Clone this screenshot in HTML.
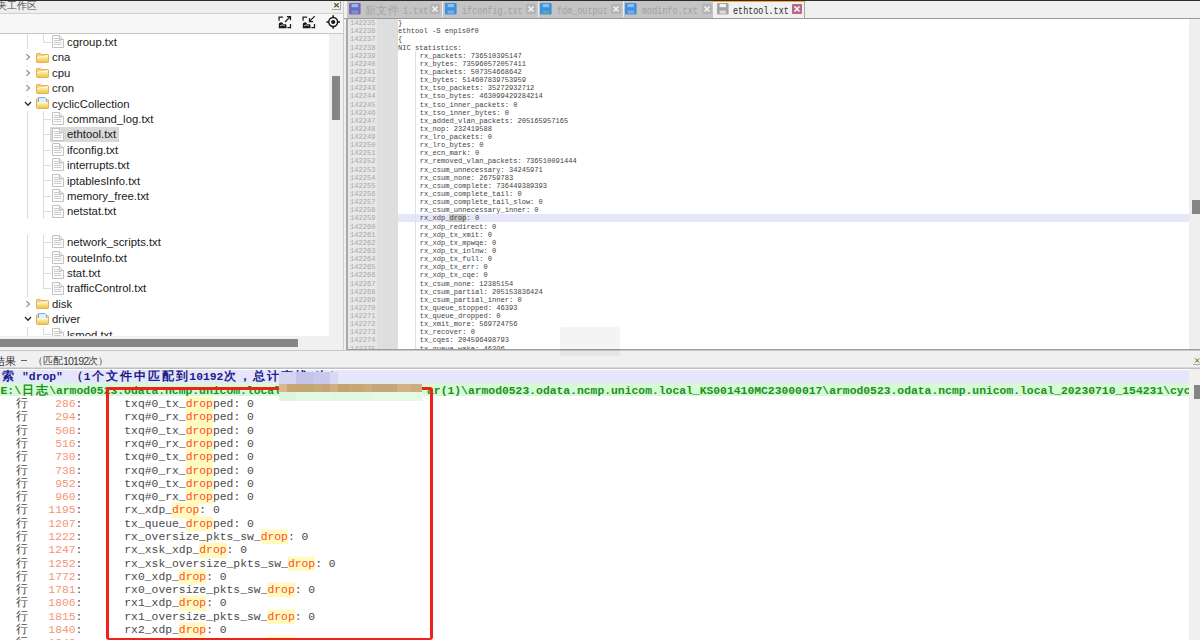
<!DOCTYPE html><html><head><meta charset="utf-8"><style>
*{margin:0;padding:0;box-sizing:border-box}
html,body{width:1200px;height:640px;overflow:hidden;background:#f0f0f0;position:relative;font-family:"Liberation Sans",sans-serif}
.abs{position:absolute}
.mono{font-family:"Liberation Mono",monospace;white-space:pre}
.ed{position:absolute;left:398px;font-family:"Liberation Mono",monospace;font-size:7.08px;line-height:8.136px;height:8.136px;color:#444444;white-space:pre}
.ln{position:absolute;left:350px;font-family:"Liberation Mono",monospace;font-size:7.08px;line-height:8.136px;height:8.136px;color:#a8a8a8;white-space:pre}
.tr{position:absolute;font-size:11.35px;line-height:15px;color:#1a1a1a;white-space:pre}
.rs{position:absolute;left:0;width:1189px;font-family:"Liberation Mono",monospace;font-size:11.36px;line-height:13.29px;height:13.29px;color:#4a4a4a;white-space:pre}
.rs>span{top:1.8px}
.dr{color:#ff4d2e;background:#fffbbe;display:inline-block;height:13.29px;line-height:13.29px;vertical-align:top;box-shadow:0 -1.4px 0 #fffbbe}
.num{color:#f59478}
.cj{display:inline-block;text-align:center;vertical-align:baseline;line-height:10px}
</style></head><body>
<div class="abs" style="left:0;top:0;width:1200px;height:1px;background:#2b2b2b"></div>
<div class="abs" style="left:0;top:1px;width:343px;height:12px;background:#eeeeee"></div>
<div class="abs" style="left:-23.5px;top:-0.8px;font-size:10.3px;line-height:13px;color:#505050;letter-spacing:0px">文件夹工作区</div>
<div class="abs" style="left:332px;top:1px;width:9px;height:9px;background:#f3efdc;border-right:1px solid #a8a8a0;border-bottom:1px solid #a8a8a0"></div>
<svg class="abs" style="left:332px;top:1px" width="10" height="10"><path d="M2.3 2.3 L6.7 6.3 M6.7 2.3 L2.3 6.3" stroke="#5a5a52" stroke-width="1.3"/></svg>
<div class="abs" style="left:0;top:13px;width:343px;height:1px;background:#d0d0d0"></div>
<div class="abs" style="left:0;top:14px;width:343px;height:19px;background:#f7f7f7"></div>
<div class="abs" style="left:0;top:33px;width:343px;height:1px;background:#c8c8c8"></div>
<svg class="abs" style="left:270px;top:14px" width="73" height="19" viewBox="270 14 73 19"><g fill="none" stroke="#1e1e1e" stroke-width="1.25" stroke-linecap="square"><path d="M279.1 20 V17 H282.5"/><path d="M290.5 24.5 V27.6 H288.0"/><path d="M285.5 21.5 L290.3 16.6 M287.5 16.6 H290.5 V19.6"/></g><path d="M278.8 28.2 V25 Q278.8 22.2 281.1 22.2 Q282.7 22.2 283.3 24 H285.0 Q286.5 24 286.5 25.5 V28.2 Z" fill="#1a1a1a"/><path d="M280.1 25.8 Q282.0 24.6 285.0 25.2" fill="none" stroke="#f4f4f4" stroke-width="0.8"/><g fill="none" stroke="#1e1e1e" stroke-width="1.25" stroke-linecap="square"><path d="M303.1 20 V17 H306.5"/><path d="M314.5 24.5 V27.6 H312.0"/><path d="M314.3 16.6 L309.5 21.4 M309.5 18.5 V21.5 H312.5"/></g><path d="M302.8 28.2 V25 Q302.8 22.2 305.1 22.2 Q306.7 22.2 307.3 24 H309.0 Q310.5 24 310.5 25.5 V28.2 Z" fill="#1a1a1a"/><path d="M304.1 25.8 Q306.0 24.6 309.0 25.2" fill="none" stroke="#f4f4f4" stroke-width="0.8"/><circle cx="333.2" cy="22" r="4.4" fill="none" stroke="#151515" stroke-width="1.5"/><circle cx="333.2" cy="22" r="2.1" fill="#151515"/><path d="M333.2 15.2 V17.4 M333.2 26.6 V28.8 M326.4 22 H328.6 M337.8 22 H340" stroke="#151515" stroke-width="1.5"/></svg>
<div class="abs" style="left:0;top:34px;width:329px;height:302px;background:#ffffff"></div>
<div class="abs" style="left:329px;top:34px;width:14px;height:316px;background:#f0f0f0"></div>
<div class="abs" style="left:332px;top:76px;width:8px;height:44px;background:#868686"></div>
<div class="abs" style="left:0;top:336px;width:329px;height:14px;background:#f0f0f0"></div>
<div class="abs" style="left:0;top:339px;width:298px;height:8px;background:#868686"></div>
<div class="abs" style="left:343px;top:1px;width:1.2px;height:350px;background:#cecece"></div>
<div class="abs" style="left:0;top:350px;width:344px;height:1px;background:#b0b0b0"></div>
<div class="abs" style="left:0;top:0;width:329px;height:336px;overflow:hidden">
<div class="abs" style="left:27px;top:34px;width:1px;height:14.899999999999999px;background:#dcdcdc"></div>
<div class="abs" style="left:43px;top:34px;width:1px;height:8.5px;background:#dcdcdc"></div>
<div class="abs" style="left:27px;top:111.1px;width:1px;height:107.80000000000001px;background:#dcdcdc"></div>
<div class="abs" style="left:27px;top:234.70000000000002px;width:1px;height:62.19999999999996px;background:#dcdcdc"></div>
<div class="abs" style="left:27px;top:326.7px;width:1px;height:9.300000000000011px;background:#dcdcdc"></div>
<div class="abs" style="left:43px;top:326.7px;width:1px;height:8.400000000000034px;background:#dcdcdc"></div>
<div class="abs" style="left:43px;top:42px;width:8px;height:1px;background:#dcdcdc"></div>
<div class="abs" style="left:43px;top:119px;width:8px;height:1px;background:#dcdcdc"></div>
<div class="abs" style="left:43px;top:134px;width:8px;height:1px;background:#dcdcdc"></div>
<div class="abs" style="left:43px;top:150px;width:8px;height:1px;background:#dcdcdc"></div>
<div class="abs" style="left:43px;top:165px;width:8px;height:1px;background:#dcdcdc"></div>
<div class="abs" style="left:43px;top:180px;width:8px;height:1px;background:#dcdcdc"></div>
<div class="abs" style="left:43px;top:196px;width:8px;height:1px;background:#dcdcdc"></div>
<div class="abs" style="left:43px;top:211px;width:8px;height:1px;background:#dcdcdc"></div>
<div class="abs" style="left:43px;top:242px;width:8px;height:1px;background:#dcdcdc"></div>
<div class="abs" style="left:43px;top:257px;width:8px;height:1px;background:#dcdcdc"></div>
<div class="abs" style="left:43px;top:273px;width:8px;height:1px;background:#dcdcdc"></div>
<div class="abs" style="left:43px;top:288px;width:8px;height:1px;background:#dcdcdc"></div>
<div class="abs" style="left:43px;top:334px;width:8px;height:1px;background:#dcdcdc"></div>
<div class="abs" style="left:27px;top:65.1px;width:1px;height:2px;background:#e4e4e4"></div>
<div class="abs" style="left:27px;top:80.5px;width:1px;height:2px;background:#e4e4e4"></div>
<div class="abs" style="left:27px;top:95.9px;width:1px;height:2px;background:#e4e4e4"></div>
<div class="abs" style="left:27px;top:311.5px;width:1px;height:2px;background:#e4e4e4"></div>
<div class="abs" style="left:43px;top:111.1px;width:1px;height:107.80000000000001px;background:#dcdcdc"></div>
<div class="abs" style="left:43px;top:234.70000000000002px;width:1px;height:54.19999999999996px;background:#dcdcdc"></div>
<svg class="abs" style="left:52px;top:35.2px" width="12" height="13" viewBox="0 0 12 13"><path d="M0.5 0.5 H7.5 L11.5 4.5 V12.5 H0.5 Z" fill="#fdfdfd" stroke="#c2c2c2"/><path d="M7.5 0.5 V4.5 H11.5" fill="#ececec" stroke="#c2c2c2"/><path d="M2 3.5 H7 M2 5.5 H9.5 M2 7.5 H9.5 M2 9.5 H9.5" stroke="#c6c6c6" stroke-width="0.9"/></svg>
<div class="tr" style="left:67px;top:35.0px">cgroup.txt</div>
<svg class="abs" style="left:25px;top:53.3px" width="7" height="8" viewBox="0 0 7 8"><path d="M1.3 1.2 L4.6 4 L1.3 6.8" fill="none" stroke="#8a8a8a" stroke-width="1.1"/></svg>
<svg class="abs" style="left:36px;top:52.7px" width="13" height="10" viewBox="0 0 13 10"><defs><linearGradient id="fg" x1="0" y1="0" x2="0" y2="1"><stop offset="0" stop-color="#fff3c4"/><stop offset="0.55" stop-color="#f9dc78"/><stop offset="1" stop-color="#f0c444"/></linearGradient></defs><path d="M0.5 1.2 Q0.5 0.5 1.2 0.5 H4.5 L5.5 1.5 H11.8 Q12.5 1.5 12.5 2.2 V8.8 Q12.5 9.5 11.8 9.5 H1.2 Q0.5 9.5 0.5 8.8 Z" fill="#f4d27a" stroke="#e6ae5e"/><path d="M1 4.2 L12 2.6 V9 H1 Z" fill="url(#fg)"/><path d="M1.2 4.3 L11.8 2.7" stroke="#fffdf0" stroke-width="1"/></svg>
<div class="tr" style="left:52px;top:50.4px">cna</div>
<svg class="abs" style="left:25px;top:68.7px" width="7" height="8" viewBox="0 0 7 8"><path d="M1.3 1.2 L4.6 4 L1.3 6.8" fill="none" stroke="#8a8a8a" stroke-width="1.1"/></svg>
<svg class="abs" style="left:36px;top:68.1px" width="13" height="10" viewBox="0 0 13 10"><defs><linearGradient id="fg" x1="0" y1="0" x2="0" y2="1"><stop offset="0" stop-color="#fff3c4"/><stop offset="0.55" stop-color="#f9dc78"/><stop offset="1" stop-color="#f0c444"/></linearGradient></defs><path d="M0.5 1.2 Q0.5 0.5 1.2 0.5 H4.5 L5.5 1.5 H11.8 Q12.5 1.5 12.5 2.2 V8.8 Q12.5 9.5 11.8 9.5 H1.2 Q0.5 9.5 0.5 8.8 Z" fill="#f4d27a" stroke="#e6ae5e"/><path d="M1 4.2 L12 2.6 V9 H1 Z" fill="url(#fg)"/><path d="M1.2 4.3 L11.8 2.7" stroke="#fffdf0" stroke-width="1"/></svg>
<div class="tr" style="left:52px;top:65.8px">cpu</div>
<svg class="abs" style="left:25px;top:84.1px" width="7" height="8" viewBox="0 0 7 8"><path d="M1.3 1.2 L4.6 4 L1.3 6.8" fill="none" stroke="#8a8a8a" stroke-width="1.1"/></svg>
<svg class="abs" style="left:36px;top:83.5px" width="13" height="10" viewBox="0 0 13 10"><defs><linearGradient id="fg" x1="0" y1="0" x2="0" y2="1"><stop offset="0" stop-color="#fff3c4"/><stop offset="0.55" stop-color="#f9dc78"/><stop offset="1" stop-color="#f0c444"/></linearGradient></defs><path d="M0.5 1.2 Q0.5 0.5 1.2 0.5 H4.5 L5.5 1.5 H11.8 Q12.5 1.5 12.5 2.2 V8.8 Q12.5 9.5 11.8 9.5 H1.2 Q0.5 9.5 0.5 8.8 Z" fill="#f4d27a" stroke="#e6ae5e"/><path d="M1 4.2 L12 2.6 V9 H1 Z" fill="url(#fg)"/><path d="M1.2 4.3 L11.8 2.7" stroke="#fffdf0" stroke-width="1"/></svg>
<div class="tr" style="left:52px;top:81.2px">cron</div>
<svg class="abs" style="left:24px;top:100.8px" width="8" height="6" viewBox="0 0 8 6"><path d="M1 1 L4 4.2 L7 1" fill="none" stroke="#2a2a2a" stroke-width="1.3"/></svg>
<svg class="abs" style="left:36px;top:97.3px" width="13" height="12" viewBox="0 0 13 12"><defs><linearGradient id="og" x1="0" y1="0" x2="0" y2="1"><stop offset="0" stop-color="#fff3c0"/><stop offset="1" stop-color="#f2c84c"/></linearGradient></defs><path d="M0.5 2.5 Q0.5 1.5 1.5 1.5 H4.5 L5.5 2.5 H11.5 Q12.5 2.5 12.5 3.5 V10.5 Q12.5 11.5 11.5 11.5 H1.5 Q0.5 11.5 0.5 10.5 Z" fill="#f6d680" stroke="#e4ad5c"/><path d="M2.5 0.5 H9 L10.5 2.5 V6 H2.5 Z" fill="#dcefff" stroke="#5f9fd6" stroke-width="0.8"/><path d="M1 5.5 H12 V11 H1 Z" fill="url(#og)"/><path d="M1 5.6 H12" stroke="#fffbe8" stroke-width="0.9"/></svg>
<div class="tr" style="left:52px;top:96.6px">cyclicCollection</div>
<svg class="abs" style="left:52px;top:112.2px" width="12" height="13" viewBox="0 0 12 13"><path d="M0.5 0.5 H7.5 L11.5 4.5 V12.5 H0.5 Z" fill="#fdfdfd" stroke="#c2c2c2"/><path d="M7.5 0.5 V4.5 H11.5" fill="#ececec" stroke="#c2c2c2"/><path d="M2 3.5 H7 M2 5.5 H9.5 M2 7.5 H9.5 M2 9.5 H9.5" stroke="#c6c6c6" stroke-width="0.9"/></svg>
<div class="tr" style="left:67px;top:112.0px">command_log.txt</div>
<div class="abs" style="left:50.3px;top:126.5px;width:68.7px;height:15.2px;background:#d9d9d9"></div>
<svg class="abs" style="left:52px;top:127.6px" width="12" height="13" viewBox="0 0 12 13"><path d="M0.5 0.5 H7.5 L11.5 4.5 V12.5 H0.5 Z" fill="#fdfdfd" stroke="#c2c2c2"/><path d="M7.5 0.5 V4.5 H11.5" fill="#ececec" stroke="#c2c2c2"/><path d="M2 3.5 H7 M2 5.5 H9.5 M2 7.5 H9.5 M2 9.5 H9.5" stroke="#c6c6c6" stroke-width="0.9"/></svg>
<div class="tr" style="left:67px;top:127.4px">ethtool.txt</div>
<svg class="abs" style="left:52px;top:143.0px" width="12" height="13" viewBox="0 0 12 13"><path d="M0.5 0.5 H7.5 L11.5 4.5 V12.5 H0.5 Z" fill="#fdfdfd" stroke="#c2c2c2"/><path d="M7.5 0.5 V4.5 H11.5" fill="#ececec" stroke="#c2c2c2"/><path d="M2 3.5 H7 M2 5.5 H9.5 M2 7.5 H9.5 M2 9.5 H9.5" stroke="#c6c6c6" stroke-width="0.9"/></svg>
<div class="tr" style="left:67px;top:142.8px">ifconfig.txt</div>
<svg class="abs" style="left:52px;top:158.4px" width="12" height="13" viewBox="0 0 12 13"><path d="M0.5 0.5 H7.5 L11.5 4.5 V12.5 H0.5 Z" fill="#fdfdfd" stroke="#c2c2c2"/><path d="M7.5 0.5 V4.5 H11.5" fill="#ececec" stroke="#c2c2c2"/><path d="M2 3.5 H7 M2 5.5 H9.5 M2 7.5 H9.5 M2 9.5 H9.5" stroke="#c6c6c6" stroke-width="0.9"/></svg>
<div class="tr" style="left:67px;top:158.2px">interrupts.txt</div>
<svg class="abs" style="left:52px;top:173.8px" width="12" height="13" viewBox="0 0 12 13"><path d="M0.5 0.5 H7.5 L11.5 4.5 V12.5 H0.5 Z" fill="#fdfdfd" stroke="#c2c2c2"/><path d="M7.5 0.5 V4.5 H11.5" fill="#ececec" stroke="#c2c2c2"/><path d="M2 3.5 H7 M2 5.5 H9.5 M2 7.5 H9.5 M2 9.5 H9.5" stroke="#c6c6c6" stroke-width="0.9"/></svg>
<div class="tr" style="left:67px;top:173.6px">iptablesInfo.txt</div>
<svg class="abs" style="left:52px;top:189.2px" width="12" height="13" viewBox="0 0 12 13"><path d="M0.5 0.5 H7.5 L11.5 4.5 V12.5 H0.5 Z" fill="#fdfdfd" stroke="#c2c2c2"/><path d="M7.5 0.5 V4.5 H11.5" fill="#ececec" stroke="#c2c2c2"/><path d="M2 3.5 H7 M2 5.5 H9.5 M2 7.5 H9.5 M2 9.5 H9.5" stroke="#c6c6c6" stroke-width="0.9"/></svg>
<div class="tr" style="left:67px;top:189.0px">memory_free.txt</div>
<svg class="abs" style="left:52px;top:204.6px" width="12" height="13" viewBox="0 0 12 13"><path d="M0.5 0.5 H7.5 L11.5 4.5 V12.5 H0.5 Z" fill="#fdfdfd" stroke="#c2c2c2"/><path d="M7.5 0.5 V4.5 H11.5" fill="#ececec" stroke="#c2c2c2"/><path d="M2 3.5 H7 M2 5.5 H9.5 M2 7.5 H9.5 M2 9.5 H9.5" stroke="#c6c6c6" stroke-width="0.9"/></svg>
<div class="tr" style="left:67px;top:204.4px">netstat.txt</div>
<svg class="abs" style="left:52px;top:235.4px" width="12" height="13" viewBox="0 0 12 13"><path d="M0.5 0.5 H7.5 L11.5 4.5 V12.5 H0.5 Z" fill="#fdfdfd" stroke="#c2c2c2"/><path d="M7.5 0.5 V4.5 H11.5" fill="#ececec" stroke="#c2c2c2"/><path d="M2 3.5 H7 M2 5.5 H9.5 M2 7.5 H9.5 M2 9.5 H9.5" stroke="#c6c6c6" stroke-width="0.9"/></svg>
<div class="tr" style="left:67px;top:235.2px">network_scripts.txt</div>
<svg class="abs" style="left:52px;top:250.8px" width="12" height="13" viewBox="0 0 12 13"><path d="M0.5 0.5 H7.5 L11.5 4.5 V12.5 H0.5 Z" fill="#fdfdfd" stroke="#c2c2c2"/><path d="M7.5 0.5 V4.5 H11.5" fill="#ececec" stroke="#c2c2c2"/><path d="M2 3.5 H7 M2 5.5 H9.5 M2 7.5 H9.5 M2 9.5 H9.5" stroke="#c6c6c6" stroke-width="0.9"/></svg>
<div class="tr" style="left:67px;top:250.6px">routeInfo.txt</div>
<svg class="abs" style="left:52px;top:266.2px" width="12" height="13" viewBox="0 0 12 13"><path d="M0.5 0.5 H7.5 L11.5 4.5 V12.5 H0.5 Z" fill="#fdfdfd" stroke="#c2c2c2"/><path d="M7.5 0.5 V4.5 H11.5" fill="#ececec" stroke="#c2c2c2"/><path d="M2 3.5 H7 M2 5.5 H9.5 M2 7.5 H9.5 M2 9.5 H9.5" stroke="#c6c6c6" stroke-width="0.9"/></svg>
<div class="tr" style="left:67px;top:266.0px">stat.txt</div>
<svg class="abs" style="left:52px;top:281.6px" width="12" height="13" viewBox="0 0 12 13"><path d="M0.5 0.5 H7.5 L11.5 4.5 V12.5 H0.5 Z" fill="#fdfdfd" stroke="#c2c2c2"/><path d="M7.5 0.5 V4.5 H11.5" fill="#ececec" stroke="#c2c2c2"/><path d="M2 3.5 H7 M2 5.5 H9.5 M2 7.5 H9.5 M2 9.5 H9.5" stroke="#c6c6c6" stroke-width="0.9"/></svg>
<div class="tr" style="left:67px;top:281.4px">trafficControl.txt</div>
<svg class="abs" style="left:25px;top:299.7px" width="7" height="8" viewBox="0 0 7 8"><path d="M1.3 1.2 L4.6 4 L1.3 6.8" fill="none" stroke="#8a8a8a" stroke-width="1.1"/></svg>
<svg class="abs" style="left:36px;top:299.1px" width="13" height="10" viewBox="0 0 13 10"><defs><linearGradient id="fg" x1="0" y1="0" x2="0" y2="1"><stop offset="0" stop-color="#fff3c4"/><stop offset="0.55" stop-color="#f9dc78"/><stop offset="1" stop-color="#f0c444"/></linearGradient></defs><path d="M0.5 1.2 Q0.5 0.5 1.2 0.5 H4.5 L5.5 1.5 H11.8 Q12.5 1.5 12.5 2.2 V8.8 Q12.5 9.5 11.8 9.5 H1.2 Q0.5 9.5 0.5 8.8 Z" fill="#f4d27a" stroke="#e6ae5e"/><path d="M1 4.2 L12 2.6 V9 H1 Z" fill="url(#fg)"/><path d="M1.2 4.3 L11.8 2.7" stroke="#fffdf0" stroke-width="1"/></svg>
<div class="tr" style="left:52px;top:296.8px">disk</div>
<svg class="abs" style="left:24px;top:316.4px" width="8" height="6" viewBox="0 0 8 6"><path d="M1 1 L4 4.2 L7 1" fill="none" stroke="#2a2a2a" stroke-width="1.3"/></svg>
<svg class="abs" style="left:36px;top:312.9px" width="13" height="12" viewBox="0 0 13 12"><defs><linearGradient id="og" x1="0" y1="0" x2="0" y2="1"><stop offset="0" stop-color="#fff3c0"/><stop offset="1" stop-color="#f2c84c"/></linearGradient></defs><path d="M0.5 2.5 Q0.5 1.5 1.5 1.5 H4.5 L5.5 2.5 H11.5 Q12.5 2.5 12.5 3.5 V10.5 Q12.5 11.5 11.5 11.5 H1.5 Q0.5 11.5 0.5 10.5 Z" fill="#f6d680" stroke="#e4ad5c"/><path d="M2.5 0.5 H9 L10.5 2.5 V6 H2.5 Z" fill="#dcefff" stroke="#5f9fd6" stroke-width="0.8"/><path d="M1 5.5 H12 V11 H1 Z" fill="url(#og)"/><path d="M1 5.6 H12" stroke="#fffbe8" stroke-width="0.9"/></svg>
<div class="tr" style="left:52px;top:312.2px">driver</div>
<svg class="abs" style="left:52px;top:327.8px" width="12" height="13" viewBox="0 0 12 13"><path d="M0.5 0.5 H7.5 L11.5 4.5 V12.5 H0.5 Z" fill="#fdfdfd" stroke="#c2c2c2"/><path d="M7.5 0.5 V4.5 H11.5" fill="#ececec" stroke="#c2c2c2"/><path d="M2 3.5 H7 M2 5.5 H9.5 M2 7.5 H9.5 M2 9.5 H9.5" stroke="#c6c6c6" stroke-width="0.9"/></svg>
<div class="tr" style="left:67px;top:327.6px">lsmod.txt</div>
</div>
<div class="abs" style="left:344px;top:1px;width:856px;height:17px;background:#f0f0f0"></div>
<div class="abs" style="left:347px;top:1px;width:366px;height:17px;background:#c4c4c4"></div>
<div class="abs" style="left:442px;top:1px;width:1px;height:16px;background:#ececec"></div>
<div class="abs" style="left:538px;top:1px;width:1px;height:16px;background:#ececec"></div>
<div class="abs" style="left:623px;top:1px;width:1px;height:16px;background:#ececec"></div>
<svg class="abs" style="left:349px;top:3px" width="12" height="12" viewBox="0 0 12 12"><rect x="0" y="0" width="11.6" height="11.5" rx="1.2" fill="#7a66b4"/><rect x="2.6" y="1" width="6.4" height="3.2" fill="#86c2f2"/><rect x="2.6" y="7.5" width="6.4" height="3.2" fill="#7c90d4"/></svg>
<svg class="abs" style="left:444.8px;top:3px" width="12" height="12" viewBox="0 0 12 12"><rect x="0" y="0" width="11.6" height="11.5" rx="1.2" fill="#3f8fdc"/><rect x="2.6" y="1" width="6.4" height="3.2" fill="#86c2f2"/><rect x="2.6" y="7.5" width="6.4" height="3.2" fill="#78aee6"/></svg>
<svg class="abs" style="left:540.3px;top:3px" width="12" height="12" viewBox="0 0 12 12"><rect x="0" y="0" width="11.6" height="11.5" rx="1.2" fill="#3f8fdc"/><rect x="2.6" y="1" width="6.4" height="3.2" fill="#86c2f2"/><rect x="2.6" y="7.5" width="6.4" height="3.2" fill="#58aaa0"/></svg>
<svg class="abs" style="left:625.3px;top:3px" width="12" height="12" viewBox="0 0 12 12"><rect x="0" y="0" width="11.6" height="11.5" rx="1.2" fill="#3f8fdc"/><rect x="2.6" y="1" width="6.4" height="3.2" fill="#86c2f2"/><rect x="2.6" y="7.5" width="6.4" height="3.2" fill="#78aee6"/></svg>
<div class="abs" style="left:365px;top:3.5px;font-size:10.5px;line-height:13px;color:#a4a4a4;letter-spacing:0.3px">新文件</div>
<div class="abs mono" style="left:403px;top:5.5px;font-size:10px;line-height:12px;color:#a2a2a2;transform:scaleX(0.845);transform-origin:0 0">1.txt</div>
<svg class="abs" style="left:430px;top:4px" width="10" height="10" viewBox="0 0 10 10"><rect x="0" y="0" width="10" height="10" rx="1" fill="#b4b4b4"/><path d="M2.5 2.5 L7.5 7.5 M7.5 2.5 L2.5 7.5" stroke="#f4f4f4" stroke-width="1.6"/></svg>
<div class="abs mono" style="left:461.5px;top:5.5px;font-size:10px;line-height:12px;color:#a2a2a2;transform:scaleX(0.845);transform-origin:0 0">ifconfig.txt</div>
<svg class="abs" style="left:525.5px;top:4px" width="10" height="10" viewBox="0 0 10 10"><rect x="0" y="0" width="10" height="10" rx="1" fill="#b4b4b4"/><path d="M2.5 2.5 L7.5 7.5 M7.5 2.5 L2.5 7.5" stroke="#f4f4f4" stroke-width="1.6"/></svg>
<div class="abs mono" style="left:557px;top:5.5px;font-size:10px;line-height:12px;color:#a2a2a2;transform:scaleX(0.845);transform-origin:0 0">fdm_output</div>
<svg class="abs" style="left:611px;top:4px" width="10" height="10" viewBox="0 0 10 10"><rect x="0" y="0" width="10" height="10" rx="1" fill="#b4b4b4"/><path d="M2.5 2.5 L7.5 7.5 M7.5 2.5 L2.5 7.5" stroke="#f4f4f4" stroke-width="1.6"/></svg>
<div class="abs mono" style="left:642px;top:5.5px;font-size:10px;line-height:12px;color:#a2a2a2;transform:scaleX(0.845);transform-origin:0 0">modinfo.txt</div>
<svg class="abs" style="left:701.5px;top:4px" width="10" height="10" viewBox="0 0 10 10"><rect x="0" y="0" width="10" height="10" rx="1" fill="#b4b4b4"/><path d="M2.5 2.5 L7.5 7.5 M7.5 2.5 L2.5 7.5" stroke="#f4f4f4" stroke-width="1.6"/></svg>
<div class="abs" style="left:713px;top:1px;width:92px;height:17px;background:#f0f0f0;border-right:1px solid #a8a8a8"></div>
<div class="abs" style="left:713px;top:1px;width:92px;height:1.2px;background:#f5a623"></div>
<svg class="abs" style="left:716.8px;top:3px" width="12" height="12" viewBox="0 0 12 12"><rect x="0" y="0" width="11.6" height="11.5" rx="1.2" fill="#a4a4a4"/><rect x="2.6" y="1" width="6.4" height="3.2" fill="#f2f2f2"/><rect x="2.6" y="7.5" width="6.4" height="3.2" fill="#dadada"/></svg>
<div class="abs mono" style="left:732.5px;top:5.5px;font-size:10px;line-height:12px;color:#2c2c2c;transform:scaleX(0.845);transform-origin:0 0">ethtool.txt</div>
<svg class="abs" style="left:791.5px;top:4px" width="10" height="10" viewBox="0 0 10 10"><rect x="0" y="0" width="10" height="10" rx="1" fill="#b8688a"/><path d="M2.5 2.5 L7.5 7.5 M7.5 2.5 L2.5 7.5" stroke="#ffffff" stroke-width="1.6"/></svg>
<div class="abs" style="left:344px;top:17.5px;width:856px;height:1px;background:#999999"></div>
<div class="abs" style="left:346.2px;top:18px;width:1.5px;height:333px;background:#a8a8a8"></div>
<div class="abs" style="left:347.5px;top:18.5px;width:29px;height:330px;background:#e7e7e7"></div>
<div class="abs" style="left:376.5px;top:18.5px;width:21.5px;height:330px;background:#dedede"></div>
<div class="abs" style="left:398px;top:18.5px;width:791px;height:330px;background:#ffffff"></div>
<div class="abs" style="left:1189px;top:18.5px;width:11px;height:330px;background:#efefef"></div>
<div class="abs" style="left:1192px;top:200px;width:8px;height:14px;background:#858585"></div>
<div class="abs" style="left:346px;top:348.5px;width:854px;height:2px;background:#a8a8a8"></div>
<div class="abs" style="left:398px;top:18.5px;width:791px;height:330px;overflow:hidden">
<div class="abs" style="left:0;top:195.51px;width:791px;height:8.136px;background:#e6e6fb"></div>
<div class="abs" style="left:16.8px;top:32.79px;width:0;height:301.03px;border-left:1px solid #e0e0e0"></div>
<div class="ed" style="left:0px;top:0.65px">}</div>
<div class="ed" style="left:0px;top:8.786px">ethtool -S enp1s0f0</div>
<div class="ed" style="left:0px;top:16.922px">{</div>
<div class="ed" style="left:0px;top:25.058px">NIC statistics:</div>
<div class="ed" style="left:21.7px;top:33.194px">rx_packets: 736510395147</div>
<div class="ed" style="left:21.7px;top:41.33px">rx_bytes: 735960572057411</div>
<div class="ed" style="left:21.7px;top:49.466px">tx_packets: 507354668642</div>
<div class="ed" style="left:21.7px;top:57.602px">tx_bytes: 514607839753959</div>
<div class="ed" style="left:21.7px;top:65.738px">tx_tso_packets: 35272932712</div>
<div class="ed" style="left:21.7px;top:73.874px">tx_tso_bytes: 463099429284214</div>
<div class="ed" style="left:21.7px;top:82.01px">tx_tso_inner_packets: 0</div>
<div class="ed" style="left:21.7px;top:90.146px">tx_tso_inner_bytes: 0</div>
<div class="ed" style="left:21.7px;top:98.282px">tx_added_vlan_packets: 205165957165</div>
<div class="ed" style="left:21.7px;top:106.418px">tx_nop: 232419588</div>
<div class="ed" style="left:21.7px;top:114.554px">rx_lro_packets: 0</div>
<div class="ed" style="left:21.7px;top:122.69px">rx_lro_bytes: 0</div>
<div class="ed" style="left:21.7px;top:130.826px">rx_ecn_mark: 0</div>
<div class="ed" style="left:21.7px;top:138.962px">rx_removed_vlan_packets: 736510091444</div>
<div class="ed" style="left:21.7px;top:147.098px">rx_csum_unnecessary: 34245971</div>
<div class="ed" style="left:21.7px;top:155.234px">rx_csum_none: 26759783</div>
<div class="ed" style="left:21.7px;top:163.37px">rx_csum_complete: 736449389393</div>
<div class="ed" style="left:21.7px;top:171.506px">rx_csum_complete_tail: 0</div>
<div class="ed" style="left:21.7px;top:179.642px">rx_csum_complete_tail_slow: 0</div>
<div class="ed" style="left:21.7px;top:187.778px">rx_csum_unnecessary_inner: 0</div>
<div class="ed" style="left:21.7px;top:195.914px">rx_xdp_<span style="background:#c4c4c4">drop</span>: 0</div>
<div class="ed" style="left:21.7px;top:204.05px">rx_xdp_redirect: 0</div>
<div class="ed" style="left:21.7px;top:212.186px">rx_xdp_tx_xmit: 0</div>
<div class="ed" style="left:21.7px;top:220.322px">rx_xdp_tx_mpwqe: 0</div>
<div class="ed" style="left:21.7px;top:228.458px">rx_xdp_tx_inlnw: 0</div>
<div class="ed" style="left:21.7px;top:236.594px">rx_xdp_tx_full: 0</div>
<div class="ed" style="left:21.7px;top:244.73px">rx_xdp_tx_err: 0</div>
<div class="ed" style="left:21.7px;top:252.866px">rx_xdp_tx_cqe: 0</div>
<div class="ed" style="left:21.7px;top:261.002px">tx_csum_none: 12385154</div>
<div class="ed" style="left:21.7px;top:269.138px">tx_csum_partial: 205153836424</div>
<div class="ed" style="left:21.7px;top:277.274px">tx_csum_partial_inner: 0</div>
<div class="ed" style="left:21.7px;top:285.41px">tx_queue_stopped: 46393</div>
<div class="ed" style="left:21.7px;top:293.546px">tx_queue_dropped: 0</div>
<div class="ed" style="left:21.7px;top:301.682px">tx_xmit_more: 569724756</div>
<div class="ed" style="left:21.7px;top:309.818px">tx_recover: 0</div>
<div class="ed" style="left:21.7px;top:317.954px">tx_cqes: 204596498793</div>
<div class="ed" style="left:21.7px;top:326.09px">tx_queue_wake: 46396</div>
</div>
<div class="ln" style="top:19.15px">142235</div>
<div class="ln" style="top:27.286px">142236</div>
<div class="ln" style="top:35.422px">142237</div>
<div class="ln" style="top:43.558px">142238</div>
<div class="ln" style="top:51.694px">142239</div>
<div class="ln" style="top:59.83px">142240</div>
<div class="ln" style="top:67.966px">142241</div>
<div class="ln" style="top:76.102px">142242</div>
<div class="ln" style="top:84.238px">142243</div>
<div class="ln" style="top:92.374px">142244</div>
<div class="ln" style="top:100.51px">142245</div>
<div class="ln" style="top:108.646px">142246</div>
<div class="ln" style="top:116.782px">142247</div>
<div class="ln" style="top:124.918px">142248</div>
<div class="ln" style="top:133.054px">142249</div>
<div class="ln" style="top:141.19px">142250</div>
<div class="ln" style="top:149.326px">142251</div>
<div class="ln" style="top:157.462px">142252</div>
<div class="ln" style="top:165.598px">142253</div>
<div class="ln" style="top:173.734px">142254</div>
<div class="ln" style="top:181.87px">142255</div>
<div class="ln" style="top:190.006px">142256</div>
<div class="ln" style="top:198.142px">142257</div>
<div class="ln" style="top:206.278px">142258</div>
<div class="ln" style="top:214.414px">142259</div>
<div class="ln" style="top:222.55px">142260</div>
<div class="ln" style="top:230.686px">142261</div>
<div class="ln" style="top:238.822px">142262</div>
<div class="ln" style="top:246.958px">142263</div>
<div class="ln" style="top:255.094px">142264</div>
<div class="ln" style="top:263.23px">142265</div>
<div class="ln" style="top:271.366px">142266</div>
<div class="ln" style="top:279.502px">142267</div>
<div class="ln" style="top:287.638px">142268</div>
<div class="ln" style="top:295.774px">142269</div>
<div class="ln" style="top:303.91px">142270</div>
<div class="ln" style="top:312.046px">142271</div>
<div class="ln" style="top:320.182px">142272</div>
<div class="ln" style="top:328.318px">142273</div>
<div class="ln" style="top:336.454px">142274</div>
<div class="ln" style="top:344.59px">142275</div>
<div class="abs" style="left:346px;top:348.5px;width:854px;height:1.5px;background:#9c9c9c"></div>
<div class="abs" style="left:346px;top:350px;width:854px;height:1.2px;background:#d4d4d4"></div>
<div class="abs" style="left:0;top:351px;width:1200px;height:17px;background:#f0f0f0"></div>
<div class="abs" style="left:0;top:350px;width:1200px;height:1px;background:#c8c8c8"></div>
<div class="abs" style="left:-28px;top:353.5px;font-size:11px;line-height:14px;color:#3a3a3a;white-space:pre">搜索结果</div>
<div class="abs" style="left:21px;top:359.8px;width:6px;height:1px;background:#606060"></div>
<div class="abs" style="left:32.5px;top:354px;font-size:10.2px;line-height:14px;color:#3a3a3a;white-space:pre">（匹配</div>
<div class="abs" style="left:63px;top:353.5px;font-size:10.6px;line-height:14px;color:#3a3a3a;white-space:pre;letter-spacing:-0.85px">10192</div>
<div class="abs" style="left:88px;top:354px;font-size:10.2px;line-height:14px;color:#3a3a3a;white-space:pre">次）</div>
<div class="abs" style="left:0;top:367px;width:1200px;height:1px;background:#d8d8d8"></div>
<div class="abs" style="left:0;top:368px;width:1200px;height:1.3px;background:#c0c0c0"></div>
<div class="abs" style="left:1193px;top:356px;width:8px;height:9px;background:#f3efdc;border-bottom:1px solid #a8a8a0"></div>
<svg class="abs" style="left:1193px;top:356px" width="8" height="9"><path d="M2.2 2.5 L6.2 6.5 M6.2 2.5 L2.2 6.5" stroke="#444" stroke-width="0.9"/></svg>
<div class="abs" style="left:0;top:369px;width:1189px;height:271px;background:#ffffff"></div>
<div class="abs" style="left:1189px;top:369px;width:11px;height:271px;background:#f0f0f0"></div>
<div class="abs" style="left:1193.5px;top:385px;width:7px;height:14px;background:#858585"></div>
<div class="abs" style="left:0;top:0;width:1189px;height:640px;overflow:hidden">
<div class="rs" style="top:369.7px;background:#e5e5fb;color:#1c1c8c;font-weight:bold"><span style="position:absolute;left:-13px"><span class="cj" style="width:14.1px;font-size:11.8px">搜</span><span class="cj" style="width:14.1px;font-size:11.8px">索</span> "drop" <span class="cj" style="width:14.1px;font-size:11.8px">（</span>1<span class="cj" style="width:14.1px;font-size:11.8px">个</span><span class="cj" style="width:14.1px;font-size:11.8px">文</span><span class="cj" style="width:14.1px;font-size:11.8px">件</span><span class="cj" style="width:14.1px;font-size:11.8px">中</span><span class="cj" style="width:14.1px;font-size:11.8px">匹</span><span class="cj" style="width:14.1px;font-size:11.8px">配</span><span class="cj" style="width:14.1px;font-size:11.8px">到</span>10192<span class="cj" style="width:14.1px;font-size:11.8px">次</span><span class="cj" style="width:14.1px;font-size:11.8px">，</span><span class="cj" style="width:14.1px;font-size:11.8px">总</span><span class="cj" style="width:14.1px;font-size:11.8px">计</span><span class="cj" style="width:14.1px;font-size:11.8px">查</span><span class="cj" style="width:14.1px;font-size:11.8px">找</span>1<span class="cj" style="width:14.1px;font-size:11.8px">次</span><span class="cj" style="width:14.1px;font-size:11.8px">）</span></span></div>
<div class="rs" style="top:382.99px;background:#d6fad6;color:#1c901c;font-weight:bold"><span style="position:absolute;left:0.5px">E:\<span class="cj" style="width:14.1px;font-size:11.8px">日</span><span class="cj" style="width:14.1px;font-size:11.8px">志</span>\armod0523.odata.ncmp.unicom.local_KS0014101</span><span style="position:absolute;left:427px">ar(1)\armod0523.odata.ncmp.unicom.local_KS001410MC23000017\armod0523.odata.ncmp.unicom.local_20230710_154231\cyclicCollection\ethtool.txt</span></div>
<div class="rs" style="top:396.28px"><span style="position:absolute;left:14.5px"><span class="cj" style="width:14.1px;font-size:11.8px">行</span></span><span class="num" style="position:absolute;left:55.151999999999994px">286</span><span style="position:absolute;left:75.6px">:</span><span style="position:absolute;left:124.3px">txq#0_tx_<span class="dr">drop</span>ped: 0</span></div>
<div class="rs" style="top:409.57px"><span style="position:absolute;left:14.5px"><span class="cj" style="width:14.1px;font-size:11.8px">行</span></span><span class="num" style="position:absolute;left:55.151999999999994px">294</span><span style="position:absolute;left:75.6px">:</span><span style="position:absolute;left:124.3px">rxq#0_rx_<span class="dr">drop</span>ped: 0</span></div>
<div class="rs" style="top:422.86px"><span style="position:absolute;left:14.5px"><span class="cj" style="width:14.1px;font-size:11.8px">行</span></span><span class="num" style="position:absolute;left:55.151999999999994px">508</span><span style="position:absolute;left:75.6px">:</span><span style="position:absolute;left:124.3px">txq#0_tx_<span class="dr">drop</span>ped: 0</span></div>
<div class="rs" style="top:436.15px"><span style="position:absolute;left:14.5px"><span class="cj" style="width:14.1px;font-size:11.8px">行</span></span><span class="num" style="position:absolute;left:55.151999999999994px">516</span><span style="position:absolute;left:75.6px">:</span><span style="position:absolute;left:124.3px">rxq#0_rx_<span class="dr">drop</span>ped: 0</span></div>
<div class="rs" style="top:449.44px"><span style="position:absolute;left:14.5px"><span class="cj" style="width:14.1px;font-size:11.8px">行</span></span><span class="num" style="position:absolute;left:55.151999999999994px">730</span><span style="position:absolute;left:75.6px">:</span><span style="position:absolute;left:124.3px">txq#0_tx_<span class="dr">drop</span>ped: 0</span></div>
<div class="rs" style="top:462.73px"><span style="position:absolute;left:14.5px"><span class="cj" style="width:14.1px;font-size:11.8px">行</span></span><span class="num" style="position:absolute;left:55.151999999999994px">738</span><span style="position:absolute;left:75.6px">:</span><span style="position:absolute;left:124.3px">rxq#0_rx_<span class="dr">drop</span>ped: 0</span></div>
<div class="rs" style="top:476.02px"><span style="position:absolute;left:14.5px"><span class="cj" style="width:14.1px;font-size:11.8px">行</span></span><span class="num" style="position:absolute;left:55.151999999999994px">952</span><span style="position:absolute;left:75.6px">:</span><span style="position:absolute;left:124.3px">txq#0_tx_<span class="dr">drop</span>ped: 0</span></div>
<div class="rs" style="top:489.31px"><span style="position:absolute;left:14.5px"><span class="cj" style="width:14.1px;font-size:11.8px">行</span></span><span class="num" style="position:absolute;left:55.151999999999994px">960</span><span style="position:absolute;left:75.6px">:</span><span style="position:absolute;left:124.3px">rxq#0_rx_<span class="dr">drop</span>ped: 0</span></div>
<div class="rs" style="top:502.6px"><span style="position:absolute;left:14.5px"><span class="cj" style="width:14.1px;font-size:11.8px">行</span></span><span class="num" style="position:absolute;left:48.336px">1195</span><span style="position:absolute;left:75.6px">:</span><span style="position:absolute;left:124.3px">rx_xdp_<span class="dr">drop</span>: 0</span></div>
<div class="rs" style="top:515.89px"><span style="position:absolute;left:14.5px"><span class="cj" style="width:14.1px;font-size:11.8px">行</span></span><span class="num" style="position:absolute;left:48.336px">1207</span><span style="position:absolute;left:75.6px">:</span><span style="position:absolute;left:124.3px">tx_queue_<span class="dr">drop</span>ped: 0</span></div>
<div class="rs" style="top:529.18px"><span style="position:absolute;left:14.5px"><span class="cj" style="width:14.1px;font-size:11.8px">行</span></span><span class="num" style="position:absolute;left:48.336px">1222</span><span style="position:absolute;left:75.6px">:</span><span style="position:absolute;left:124.3px">rx_oversize_pkts_sw_<span class="dr">drop</span>: 0</span></div>
<div class="rs" style="top:542.47px"><span style="position:absolute;left:14.5px"><span class="cj" style="width:14.1px;font-size:11.8px">行</span></span><span class="num" style="position:absolute;left:48.336px">1247</span><span style="position:absolute;left:75.6px">:</span><span style="position:absolute;left:124.3px">rx_xsk_xdp_<span class="dr">drop</span>: 0</span></div>
<div class="rs" style="top:555.76px"><span style="position:absolute;left:14.5px"><span class="cj" style="width:14.1px;font-size:11.8px">行</span></span><span class="num" style="position:absolute;left:48.336px">1252</span><span style="position:absolute;left:75.6px">:</span><span style="position:absolute;left:124.3px">rx_xsk_oversize_pkts_sw_<span class="dr">drop</span>: 0</span></div>
<div class="rs" style="top:569.05px"><span style="position:absolute;left:14.5px"><span class="cj" style="width:14.1px;font-size:11.8px">行</span></span><span class="num" style="position:absolute;left:48.336px">1772</span><span style="position:absolute;left:75.6px">:</span><span style="position:absolute;left:124.3px">rx0_xdp_<span class="dr">drop</span>: 0</span></div>
<div class="rs" style="top:582.34px"><span style="position:absolute;left:14.5px"><span class="cj" style="width:14.1px;font-size:11.8px">行</span></span><span class="num" style="position:absolute;left:48.336px">1781</span><span style="position:absolute;left:75.6px">:</span><span style="position:absolute;left:124.3px">rx0_oversize_pkts_sw_<span class="dr">drop</span>: 0</span></div>
<div class="rs" style="top:595.63px"><span style="position:absolute;left:14.5px"><span class="cj" style="width:14.1px;font-size:11.8px">行</span></span><span class="num" style="position:absolute;left:48.336px">1806</span><span style="position:absolute;left:75.6px">:</span><span style="position:absolute;left:124.3px">rx1_xdp_<span class="dr">drop</span>: 0</span></div>
<div class="rs" style="top:608.92px"><span style="position:absolute;left:14.5px"><span class="cj" style="width:14.1px;font-size:11.8px">行</span></span><span class="num" style="position:absolute;left:48.336px">1815</span><span style="position:absolute;left:75.6px">:</span><span style="position:absolute;left:124.3px">rx1_oversize_pkts_sw_<span class="dr">drop</span>: 0</span></div>
<div class="rs" style="top:622.21px"><span style="position:absolute;left:14.5px"><span class="cj" style="width:14.1px;font-size:11.8px">行</span></span><span class="num" style="position:absolute;left:48.336px">1840</span><span style="position:absolute;left:75.6px">:</span><span style="position:absolute;left:124.3px">rx2_xdp_<span class="dr">drop</span>: 0</span></div>
<div class="rs" style="top:635.5px"><span style="position:absolute;left:14.5px"><span class="cj" style="width:14.1px;font-size:11.8px">行</span></span><span class="num" style="position:absolute;left:48.336px">1849</span><span style="position:absolute;left:75.6px">:</span><span style="position:absolute;left:124.3px">rx2_oversize_pkts_sw_<span class="dr">drop</span>: 0</span></div>
</div>
<div class="abs" style="left:106px;top:387px;width:327px;height:253px;border:3px solid #f2201a;border-bottom-width:2.3px;border-radius:3px"></div>
<div class="abs" style="left:279px;top:371.7px;width:17px;height:12.3px;background:#d4d4f1"></div>
<div class="abs" style="left:296px;top:371.7px;width:17px;height:12.3px;background:#c3c3e8"></div>
<div class="abs" style="left:313px;top:371.7px;width:17px;height:12.3px;background:#c9c9ec"></div>
<div class="abs" style="left:330px;top:371.7px;width:8px;height:12.3px;background:#d8d8f3"></div>
<div class="abs" style="left:279px;top:384px;width:8px;height:8.2px;background:#d8b68e"></div>
<div class="abs" style="left:287px;top:384px;width:9px;height:8.2px;background:#c8a676"></div>
<div class="abs" style="left:296px;top:384px;width:17px;height:8.2px;background:#c4a574"></div>
<div class="abs" style="left:313px;top:384px;width:9px;height:8.2px;background:#c6aa7a"></div>
<div class="abs" style="left:322px;top:384px;width:8px;height:8.2px;background:#c2a676"></div>
<div class="abs" style="left:330px;top:384px;width:8px;height:8.2px;background:#d0ae82"></div>
<div class="abs" style="left:338px;top:384px;width:11px;height:8.2px;background:#c4a372"></div>
<div class="abs" style="left:349px;top:384px;width:15px;height:8.2px;background:#c8a676"></div>
<div class="abs" style="left:364px;top:384px;width:8px;height:8.2px;background:#ceab7c"></div>
<div class="abs" style="left:372px;top:384px;width:25px;height:8.2px;background:#c2a878"></div>
<div class="abs" style="left:397px;top:384px;width:14px;height:8.2px;background:#d4b088"></div>
<div class="abs" style="left:411px;top:384px;width:11px;height:8.2px;background:#cfac80"></div>
<div class="abs" style="left:279px;top:392.2px;width:17px;height:8.8px;background:#dcf5dc"></div>
<div class="abs" style="left:296px;top:392.2px;width:34px;height:8.8px;background:#e2f9e2"></div>
<div class="abs" style="left:330px;top:392.2px;width:42px;height:8.8px;background:#dff8df"></div>
<div class="abs" style="left:372px;top:392.2px;width:51px;height:8.8px;background:#e4fae4"></div>
<div class="abs" style="left:560px;top:327px;width:60px;height:29px;background:rgba(0,0,0,0.045);border-radius:2px"></div>
</body></html>
